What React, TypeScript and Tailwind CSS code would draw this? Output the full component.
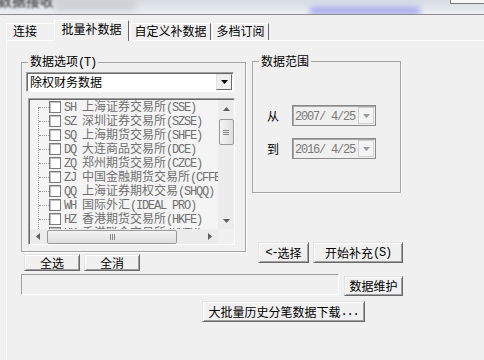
import React from 'react'

const MONO = "font-['Liberation_Mono'] tracking-[-1.2px] whitespace-pre"

function Mixed({ text }: { text: string }) {
  const parts = text.split(/([ -~]+)/).filter(Boolean)
  return (
    <>
      {parts.map((p, i) =>
        /^[ -~]+$/.test(p) ? (
          <span key={i} className={MONO}>{p}</span>
        ) : (
          <span key={i}>{p}</span>
        )
      )}
    </>
  )
}

function Tri({ dir, color = '#000' }: { dir: 'up' | 'down' | 'left' | 'right'; color?: string }) {
  const d = {
    down: 'M0 0h7L3.5 4z',
    up: 'M0 4h7L3.5 0z',
    left: 'M4 0v7L0 3.5z',
    right: 'M0 0v7L4 3.5z',
  }[dir]
  const vertical = dir === 'up' || dir === 'down'
  return (
    <svg width={vertical ? 7 : 4} height={vertical ? 4 : 7}>
      <path d={d} fill={color} />
    </svg>
  )
}

function Btn({ children, className = '' }: { children: React.ReactNode; className?: string }) {
  return (
    <div
      className={`flex items-center justify-center bg-[#f0f0f0] border border-t-[#e3e3e3] border-l-[#e3e3e3] border-r-[#696969] border-b-[#696969] shadow-[inset_1px_1px_0_#ffffff,inset_-1px_-1px_0_#a0a0a0] text-black leading-[12px] whitespace-nowrap ${className}`}
    >
      {children}
    </div>
  )
}

const markets = [
  'SH 上海证券交易所(SSE)',
  'SZ 深圳证券交易所(SZSE)',
  'SQ 上海期货交易所(SHFE)',
  'DQ 大连商品交易所(DCE)',
  'ZQ 郑州期货交易所(CZCE)',
  'ZJ 中国金融期货交易所(CFFEX)',
  'QQ 上海证券期权交易(SHQQ)',
  'WH 国际外汇(IDEAL PRO)',
  'HZ 香港期货交易所(HKFE)',
  'HK 香港联合交易所(HKEX)',
]

function VScroll() {
  return (
    <div className="w-[16px] shrink-0 flex flex-col bg-[#ececec]">
      <div className="h-[17px] flex items-center justify-center">
        <Tri dir="up" color="#606060" />
      </div>
      <div className="flex-1 flex flex-col items-center pt-[2px]">
        <div className="w-[15px] h-[26px] rounded-[2px] border border-[#9a9a9a] bg-gradient-to-r from-[#f4f4f4] to-[#dedede] flex flex-col items-center justify-center gap-[1px]">
          <div className="w-[6px] h-px bg-[#8a8a8a]" />
          <div className="w-[6px] h-px bg-[#8a8a8a]" />
          <div className="w-[6px] h-px bg-[#8a8a8a]" />
        </div>
      </div>
      <div className="h-[17px] flex items-center justify-center">
        <Tri dir="down" color="#606060" />
      </div>
    </div>
  )
}

function HScroll() {
  return (
    <div className="flex h-[15px] shrink-0 bg-[#ececec]">
      <div className="flex-1 flex">
        <div className="w-[16px] flex items-center justify-center">
          <Tri dir="left" color="#606060" />
        </div>
        <div className="flex-1 flex items-center pl-[1px]">
          <div className="w-[130px] h-[14px] rounded-[2px] border border-[#9a9a9a] bg-gradient-to-b from-[#f4f4f4] to-[#dedede] flex items-center justify-center gap-[1px]">
            <div className="w-px h-[6px] bg-[#8a8a8a]" />
            <div className="w-px h-[6px] bg-[#8a8a8a]" />
            <div className="w-px h-[6px] bg-[#8a8a8a]" />
          </div>
        </div>
        <div className="w-[16px] flex items-center justify-center">
          <Tri dir="right" color="#606060" />
        </div>
      </div>
      <div className="w-[16px] bg-[#f0f0f0]" />
    </div>
  )
}

function DatePick({ value }: { value: string }) {
  return (
    <div className="w-[84px] h-[21px] border border-[#8a8a8a] shadow-[inset_1px_1px_0_#a8a8a8] bg-[#f0f0f0] flex items-center">
      <span className="ml-[2px] text-[#7a7a7a] leading-[12px]">
        <Mixed text={value} />
      </span>
      <div className="ml-auto mr-[1px] w-[16px] h-[17px] border border-[#d0d0d0] bg-[#f4f4f4] flex items-center justify-center">
        <Tri dir="down" color="#9a9a9a" />
      </div>
    </div>
  )
}

export default function App() {
  return (
    <div className="w-[484px] h-[360px] overflow-hidden bg-[#f0f0f0] text-[12px] text-black font-['Noto_Sans_CJK_SC',sans-serif]">
      {/* title bar (cut off) */}
      <div className="relative h-[15px] overflow-hidden border-b border-[#8c8c8c] bg-gradient-to-b from-[#d6dce2] to-[#eceff2]">
        <div className="absolute left-[-2px] top-[-10px] text-[14px] text-[#202020] blur-[0.8px]">数据接收</div>
        <div className="absolute left-[55px] top-[0px] w-[80px] h-[10px] bg-[#c8ccd0] blur-[4px]" />
        <div className="absolute left-[310px] top-[7px] w-[110px] h-[8px] bg-[#8a8cf0] blur-[3px] opacity-70" />
        <div className="absolute left-[450px] top-[-2px] w-[40px] h-[6px] border border-[#7a7a7a] bg-[#f6f6f6]" />
      </div>

      {/* tabs */}
      <div className="flex items-end h-[25px] pl-[6px]">
        <div className="w-[48px] h-[17px] border-t border-l border-white flex items-start pl-[6px] pt-[1px] leading-[12px]">连接</div>
        <div className="relative z-10 w-[75px] h-[21px] -mb-px border-t border-l border-white border-r border-r-[#696969] bg-[#f0f0f0] flex justify-center pt-[2px] leading-[12px]">
          批量补数据
        </div>
        <div className="ml-px w-[81px] h-[17px] border-t border-l border-white border-r border-r-[#696969] flex justify-center pt-[1px] leading-[12px]">
          自定义补数据
        </div>
        <div className="ml-px w-[57px] h-[17px] border-t border-l border-white border-r border-r-[#696969] flex justify-center pt-[1px] leading-[12px]">
          多档订阅
        </div>
      </div>

      {/* tab panel */}
      <div className="ml-[6px] h-[320px] border-t border-l border-white pt-[14px]">
        <div className="flex">
          {/* left column */}
          <div className="ml-[14px] w-[225px] shrink-0 flex flex-col">
            <fieldset className="min-w-0 h-[197px] border border-[#a5a5a5] shadow-[1px_1px_0_#ffffff]">
              <legend className="ml-[6px] px-[2px] leading-[12px]">
                数据选项<Mixed text="(T)" />
              </legend>
              <div className="ml-[4px] mt-[3px] w-[208px] h-[20px] bg-white border border-t-[#a0a0a0] border-l-[#a0a0a0] border-r-white border-b-white shadow-[inset_1px_1px_0_#696969] flex items-center">
                <span className="ml-[3px] leading-[12px]">除权财务数据</span>
                <div className="ml-auto mr-px w-[16px] h-[16px] flex items-center justify-center bg-[#f0f0f0] border border-t-[#e3e3e3] border-l-[#e3e3e3] border-r-[#696969] border-b-[#696969]">
                  <Tri dir="down" />
                </div>
              </div>
              <div className="ml-[6px] mt-[6px] w-[207px] h-[147px] border border-t-[#a0a0a0] border-l-[#a0a0a0] border-r-white border-b-white shadow-[inset_1px_1px_0_#696969] bg-[#f4f4f4] flex flex-col pl-px pt-px">
                <div className="flex flex-1 min-h-0">
                  <div className="relative flex-1 min-w-0 overflow-hidden">
                    <div className="absolute left-[8px] top-[7px] bottom-0 border-l border-dotted border-[#9a9a9a]" />
                    {markets.map((m) => (
                      <div key={m} className="flex items-center h-[14px] whitespace-nowrap">
                        <div className="ml-[9px] w-[10px] shrink-0 border-t border-dotted border-[#9a9a9a]" />
                        <div className="w-[12px] h-[12px] shrink-0 border border-[#7a7a7a] bg-white shadow-[inset_1px_1px_0_#c0c0c0]" />
                        <span className="ml-[3px] shrink-0 text-[#707070] leading-[12px]">
                          <Mixed text={m} />
                        </span>
                      </div>
                    ))}
                  </div>
                  <VScroll />
                </div>
                <HScroll />
              </div>
            </fieldset>
            <div className="flex gap-[4px] ml-[3px] mt-[2px]">
              <Btn className="w-[56px] h-[17px]">全选</Btn>
              <Btn className="w-[56px] h-[17px]">全消</Btn>
            </div>
          </div>

          {/* right column */}
          <div className="ml-[6px] flex flex-col">
            <fieldset className="min-w-0 w-[149px] h-[138px] border border-[#a5a5a5] shadow-[1px_1px_0_#ffffff]">
              <legend className="ml-[6px] px-[2px] leading-[12px]">数据范围</legend>
              <div className="mt-[38px] flex items-center">
                <span className="ml-[14px] w-[25px] leading-[12px]">从</span>
                <DatePick value="2007/ 4/25" />
              </div>
              <div className="mt-[12px] flex items-center">
                <span className="ml-[14px] w-[25px] leading-[12px]">到</span>
                <DatePick value="2016/ 4/25" />
              </div>
            </fieldset>
            <div className="flex gap-[4px] ml-[6px] mt-[49px]">
              <Btn className="w-[51px] h-[21px]">
                <Mixed text="<-" />选择
              </Btn>
              <Btn className="w-[90px] h-[21px]">
                开始补充<Mixed text="(S)" />
              </Btn>
            </div>
          </div>
        </div>

        <div className="flex items-start mt-[3px] ml-[14px]">
          <div className="w-[318px] h-[21px] border border-t-[#a0a0a0] border-l-[#a0a0a0] border-r-white border-b-white" />
          <Btn className="ml-[5px] mt-[2px] w-[59px] h-[20px]">数据维护</Btn>
        </div>

        <div className="ml-[195px] mt-[5px]">
          <Btn className="w-[163px] h-[21px]">
            大批量历史分笔数据下载<Mixed text="..." />
          </Btn>
        </div>
      </div>
    </div>
  )
}
